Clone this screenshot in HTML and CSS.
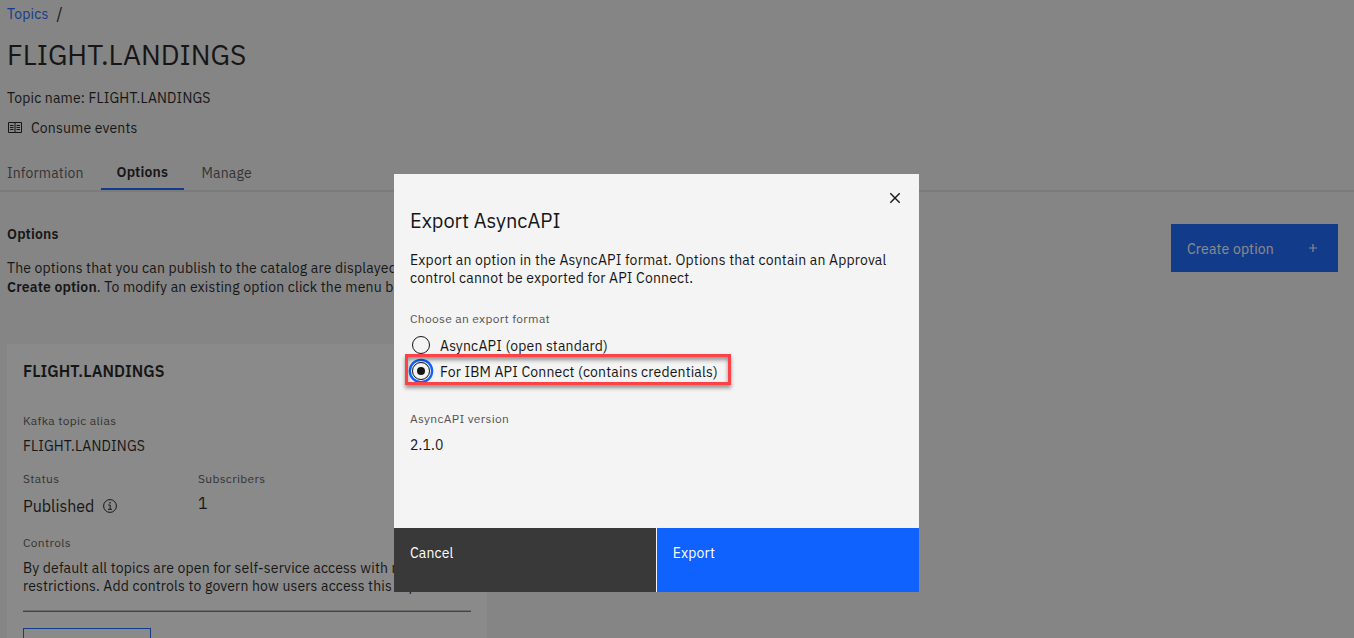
FILE: index.html
```html
<!DOCTYPE html>
<html lang="en">
<head>
<meta charset="utf-8">
<title>FLIGHT.LANDINGS</title>
<link rel="stylesheet" href="styles.css">
</head>
<body>
<main class="page">
  <nav class="breadcrumb"><a class="link">Topics</a><span class="slash">/</span></nav>
  <h1 class="title">FLIGHT.LANDINGS</h1>
  <p class="topic-name">Topic name: FLIGHT.LANDINGS</p>
  <div class="consume">
    <svg class="book" viewBox="0 0 16 14" width="16" height="14" fill="none" stroke="currentColor"><path d="M1.5 1.5h13v10h-13zM8 1.5v10M3 4.5h3.5M3 6.5h3.5M3 8.5h3.5M9.5 4.5H13M9.5 6.5H13M9.5 8.5H13"/></svg>
    <span>Consume events</span>
  </div>
  <div class="tabs">
    <span class="tab tab-info">Information</span>
    <span class="tab tab-active">Options</span>
    <span class="tab tab-manage">Manage</span>
  </div>
  <section class="intro">
    <div>
      <h2 class="intro-title">Options</h2>
      <p class="intro-text"><span>The options that you can publish to the catalog are displayed</span><br><b>Create option</b><span>. To modify an existing option click the menu button</span></p>
    </div>
    <button class="create"><span>Create option</span><svg width="10" height="10" viewBox="0 0 10 10" fill="none" stroke="currentColor" stroke-width="1.2"><path d="M5 1v8M1 5h8"/></svg></button>
  </section>
  <article class="card">
    <h3 class="card-title">FLIGHT.LANDINGS</h3>
    <div class="label">Kafka topic alias</div>
    <div class="value">FLIGHT.LANDINGS</div>
    <div class="columns">
      <div class="column">
        <div class="label">Status</div>
        <div class="status">Published
          <svg width="14" height="14" viewBox="0 0 14 14" fill="none" stroke="currentColor"><circle cx="7" cy="7" r="6.4"/><path d="M5.2 6h2v4M5 10.3h4"/><circle cx="7" cy="3.8" r=".5" fill="currentColor" stroke-width=".6"/></svg>
        </div>
      </div>
      <div class="column">
        <div class="label">Subscribers</div>
        <div class="count">1</div>
      </div>
    </div>
    <div class="label">Controls</div>
    <p class="controls">By default all topics are open for self-service access with no<br>restrictions. Add controls to govern how users access this topic.</p>
    <hr class="rule">
    <button class="outline"></button>
  </article>
</main>
<div class="overlay">
  <section class="modal">
    <div class="modal-body">
      <svg class="close" width="12" height="12" viewBox="0 0 12 12" fill="none" stroke="currentColor" stroke-width="1.4"><path d="M1.3 1.3l9.4 9.4M10.7 1.3l-9.4 9.4"/></svg>
      <h2 class="modal-title">Export AsyncAPI</h2>
      <p class="modal-text">Export an option in the AsyncAPI format. Options that contain an Approval<br>control cannot be exported for API Connect.</p>
      <div class="label">Choose an export format</div>
      <div class="radios">
        <div class="option"><i class="radio"></i><span>AsyncAPI (open standard)</span></div>
        <div class="option"><i class="radio checked"></i><span>For IBM API Connect (contains credentials)</span><i class="callout"></i></div>
      </div>
      <div class="label">AsyncAPI version</div>
      <div class="version">2.1.0</div>
    </div>
    <footer class="actions"><button class="action cancel">Cancel</button><button class="action export">Export</button></footer>
  </section>
</div>
</body>
</html>
```
FILE: styles.css
```css
* { box-sizing: border-box; margin: 0; padding: 0; }
html, body { height: 638px; overflow: hidden; }
body { background: #f4f4f4; color: #161616; font: 14px/18px "IBM Plex Sans", "Noto Sans", sans-serif; letter-spacing: .16px; white-space: nowrap; }
button { border: 0; font: inherit; letter-spacing: inherit; }
svg { flex: none; display: block; }
.page { height: 638px; overflow: hidden; }
.breadcrumb { display: flex; gap: 8px; padding: 5px 7px 0; }
.link { color: #0f62fe; }
.slash { font-size: 16px; }
.title { padding: 14px 7px 0; font-size: 28px; line-height: 36px; font-weight: 400; letter-spacing: 0; }
.topic-name { padding: 16px 7px 0; }
.consume { display: flex; align-items: center; gap: 8px; padding: 12px 7px 0; }
.tabs { display: flex; height: 55px; padding: 18px 7px 0; border-bottom: 2px solid #e0e0e0; color: #525252; }
.tab { height: 35px; padding-top: 9px; }
.tab-info { width: 94px; }
.tab-active { width: 83px; padding-top: 8px; padding-left: 15.5px; border-bottom: 2px solid #0f62fe; color: #161616; font-weight: 600; }
.tab-manage { padding-left: 17.5px; }
.intro { display: flex; justify-content: space-between; height: 152px; padding: 32px 16px 0 7px; }
.intro-title { padding-top: 1px; font-size: 14px; font-weight: 600; line-height: 18px; }
.intro-text { padding-top: 16px; line-height: 19px; }
.intro-text b { font-weight: 600; }
.create { display: flex; align-items: center; justify-content: space-between; width: 167px; height: 48px; padding: 2px 20px 0 16px; background: #0f62fe; color: #fff; }
.create svg { margin-top: -2px; }
.card { width: 480px; height: 400px; margin-left: 7px; padding: 17px 16px; background: #fff; }
.card-title { padding-bottom: 31px; font-size: 16px; line-height: 20px; font-weight: 600; letter-spacing: 0; }
.label { color: #525252; font-size: 12px; line-height: 18px; letter-spacing: .32px; }
.value { padding-top: 7px; }
.columns { display: flex; padding-top: 15px; height: 79px; }
.column { width: 175px; }
.status { display: flex; align-items: center; gap: 9px; padding-top: 8px; font-size: 16px; line-height: 20px; letter-spacing: 0; }
.count { padding-top: 6px; font-size: 16px; letter-spacing: 0; }
.controls { padding-top: 7px; }
.rule { height: 2px; margin-top: 15px; border: 0; border-top: 1px solid #c4c4c4; border-bottom: 1px solid #707070; }
.outline { width: 128px; height: 48px; margin-top: 16px; border: 1px solid #0f62fe; background: transparent; display: block; }
.overlay { position: absolute; inset: 0; padding: 174px 0 0 394px; background: rgba(22,22,22,.5); }
.modal { width: 525px; background: #f4f4f4; }
.modal-body { position: relative; height: 354px; padding: 34px 16px 0; }
.close { position: absolute; top: 18px; right: 18px; }
.modal-title { font-size: 20px; line-height: 26px; font-weight: 400; letter-spacing: 0; }
.modal-text { padding: 17px 0 14px; line-height: 18px; letter-spacing: .17px; }
.modal-text + .label { padding-top: 9px; height: 27px; }
.radios { padding: 4px 0 26px 2px; }
.option { position: relative; display: flex; align-items: center; gap: 10px; height: 26px; }
.option span { padding-top: 2px; }
.radio { display: grid; place-items: center; width: 18px; height: 18px; border: 1px solid #161616; border-radius: 50%; }
.checked { box-shadow: 0 0 0 1px #f4f4f4, 0 0 0 3.3px #0f62fe; }
.checked::after { content: ""; width: 8px; height: 8px; border-radius: 50%; background: #161616; }
.callout { position: absolute; left: -7px; top: -4px; width: 326px; height: 31px; border: 3px solid #fa4247; box-shadow: 0 3px 4px rgba(0,0,0,.4), inset 0 3px 4px rgba(0,0,0,.4); }
.version { padding-top: 8px; }
.actions { display: flex; gap: 1px; }
.action { flex: 1; height: 64px; padding: 16px 16px 30px; text-align: left; line-height: 18px; color: #fff; }
.cancel { background: #393939; }
.export { padding-left: 15.5px; background: #0f62fe; }
```
